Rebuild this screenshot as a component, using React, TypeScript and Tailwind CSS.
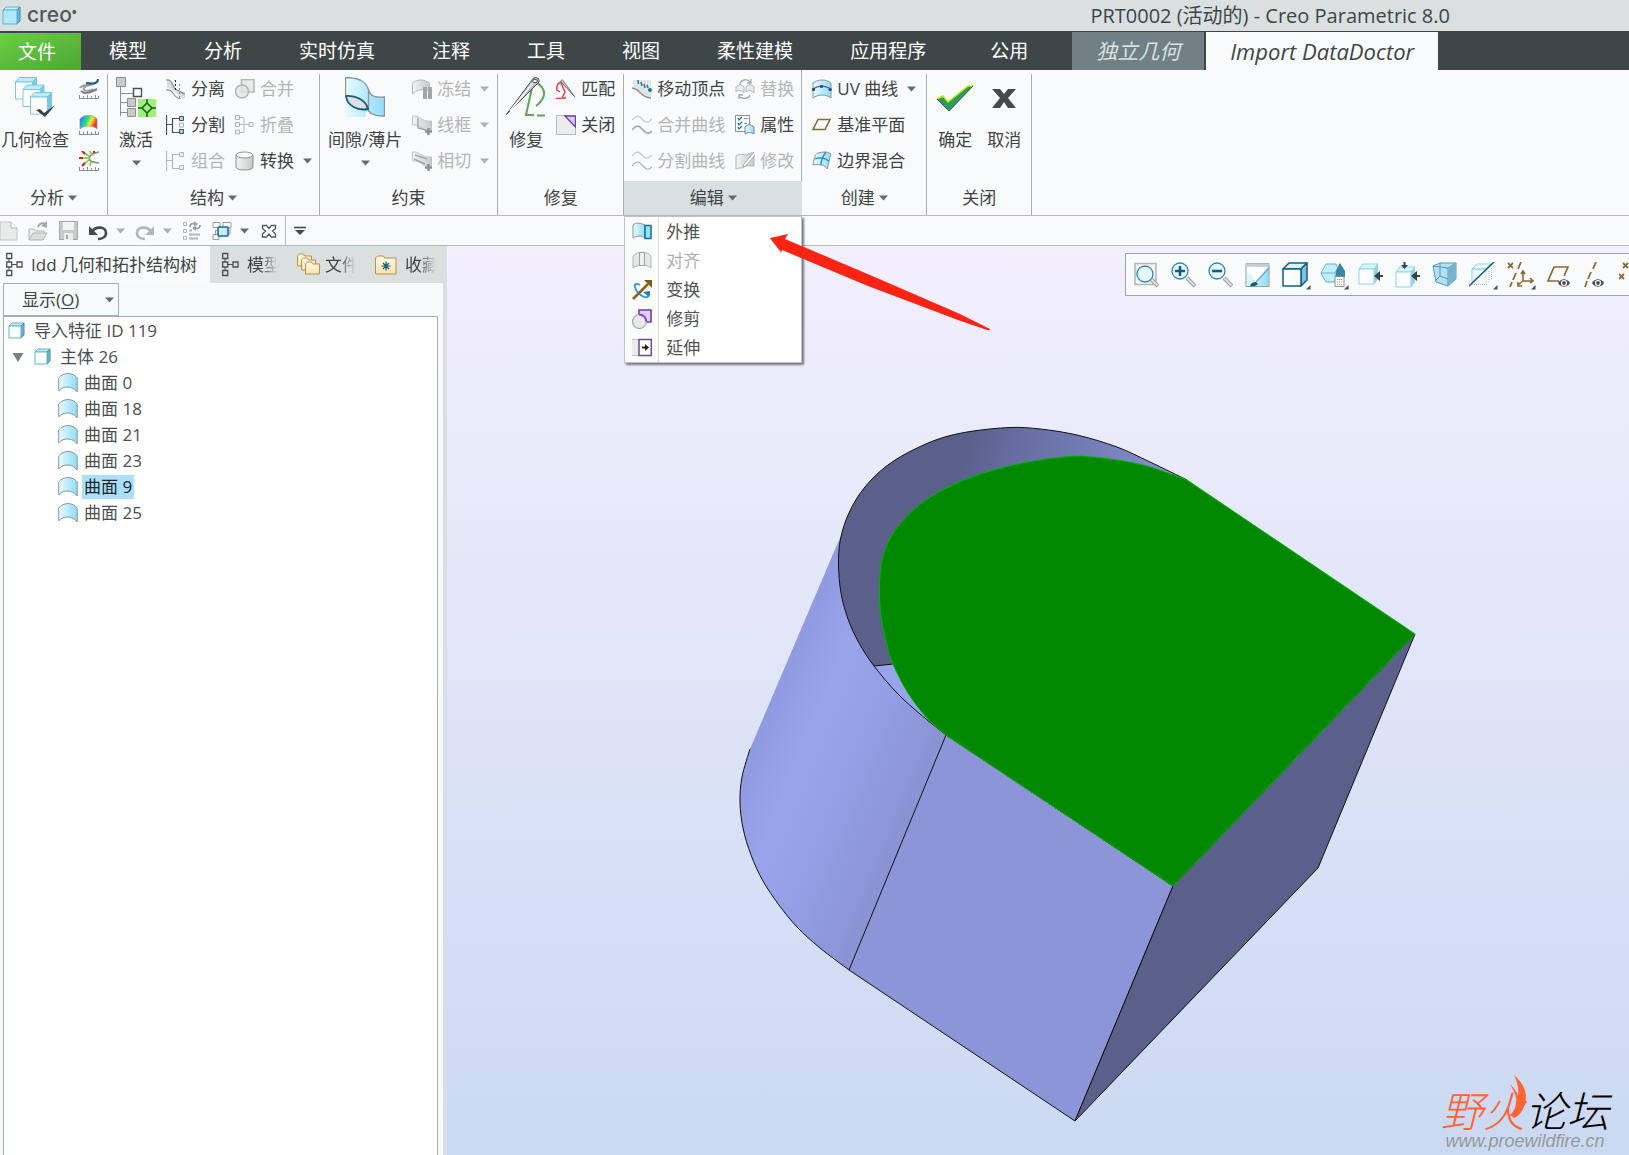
import type { ReactNode } from "react";

/* ---------- small shapes shared by the icons ---------- */

function Icon({ w = 20, h = 20, children }: { w?: number; h?: number; children: ReactNode }) {
  return (
    <svg width={w} height={h} viewBox={`0 0 ${w} ${h}`} fill="none" className="shrink-0" aria-hidden="true">
      {children}
    </svg>
  );
}

function Caret({ muted = false }: { muted?: boolean }) {
  return (
    <svg width="9" height="6" viewBox="0 0 9 6" className="shrink-0" aria-hidden="true">
      <path d="M0 0.5h9L4.5 5.5z" fill={muted ? "#aeb1b1" : "#666a6b"} />
    </svg>
  );
}

function Box({ x, y, s, d = 4, face = "#ffffff" }: { x: number; y: number; s: number; d?: number; face?: string }) {
  return (
    <g strokeLinejoin="round">
      <path d={`M${x} ${y + d}l${d} ${-d}h${s}l${-d} ${d}z`} fill="#c4effc" stroke="#5fb3d2" />
      <path d={`M${x + s} ${y + d}l${d} ${-d}v${s}l${-d} ${d}z`} fill="#6cb8d4" stroke="#3d8fb0" />
      <path d={`M${x} ${y + d}h${s}v${s}h${-s}z`} fill={face} stroke="#5fb3d2" />
    </g>
  );
}

function Gradients() {
  return (
    <svg width="0" height="0" className="absolute" aria-hidden="true">
      <defs>
        <linearGradient id="sky" x1="0" x2="1">
          <stop offset="0" stopColor="#e8fbff" />
          <stop offset="1" stopColor="#8fdcfa" />
        </linearGradient>
        <linearGradient id="ash" x1="0" x2="1">
          <stop offset="0" stopColor="#f3f3f3" />
          <stop offset="1" stopColor="#c8caca" />
        </linearGradient>
        <linearGradient id="rainbow" x1="0" x2="1" y1="0" y2="0.4">
          <stop offset="0" stopColor="#7d2be8" />
          <stop offset="0.25" stopColor="#18a8f0" />
          <stop offset="0.5" stopColor="#38e070" />
          <stop offset="0.7" stopColor="#f7ee20" />
          <stop offset="1" stopColor="#f03030" />
        </linearGradient>
        <linearGradient id="folder" x1="0" x2="0" y1="0" y2="1">
          <stop offset="0" stopColor="#fff9e6" />
          <stop offset="1" stopColor="#fbe3ad" />
        </linearGradient>
      </defs>
    </svg>
  );
}

const Ruler = () => <path d="M0 19.5h20M0.5 19v-3M4.5 19v-2M8.5 19v-3M12.5 19v-2M16.5 19v-3M19.5 19v-2" stroke="#8b8e8e" />;

/* ---------- ribbon icons ---------- */

const GeometryCheck = () => (
  <Icon w={40} h={40}>
    <g strokeLinejoin="round" stroke="#7cc6e2">
      {[0, 7.5, 15].map((n) => (
        <g key={n}>
          <path d={`M${n + 0.5} ${n + 5}l4-4.500h17l-4 4.500z`} fill="#bdecfb" />
          <path d={`M${n + 17.5} ${n + 5}l4-4.500v17l-4 4.500z`} fill="#7cc6e2" />
          <path d={`M${n + 0.5} ${n + 5}h17v17h-17z`} fill="#fff" />
        </g>
      ))}
    </g>
    <path d="M21 33l4-1 4 4 11-8-10 12z" fill="#3b4042" />
  </Icon>
);

const CurveAnalysis = () => (
  <Icon>
    <Ruler />
    <path d="M1 9c3-4 7-3 11-3M16 4c-6 3-9 2-11 5s5 4 9 1" stroke="#9a9d9f" strokeWidth="2" />
    <path d="M2 12c4 4 10 1 16-2" stroke="#7d8183" strokeWidth="2" />
    <path d="M7 4c7 1 12 1 12-4" stroke="#1f5f7c" strokeWidth="2" />
  </Icon>
);

const ColorAnalysis = () => (
  <Icon>
    <Ruler />
    <path d="M1 14V4c4-5 13-5 17 0v10c-4-4-13-4-17 0z" fill="url(#rainbow)" stroke="#8b8e8e" strokeWidth="0.6" />
  </Icon>
);

const NormalAnalysis = () => (
  <Icon>
    <Ruler />
    <path d="M20 1c-5 1-9 3-10 6 1 4 4 4 10 5" stroke="#8a8d8f" strokeWidth="1.6" />
    <path d="M9 7H3M10 5L5 2M10 9l-5 4M13 4l-2-4M12 10l-1 5" stroke="#7ec23f" strokeWidth="1.6" />
    <path d="M0 7h4M3 0l3 3M3 15l3-3M15 0v2" stroke="#c02a2a" strokeWidth="2.2" />
  </Icon>
);

const Activate = () => (
  <Icon w={40} h={40}>
    <path d="M4.500 10v29M4.500 16.500h14M4.500 25.500h8M4.500 35.500h8" stroke="#8b8e8e" />
    <path d="M0.500 0.500h9v9h-9zM11.500 21.500h8v8h-8zM11.500 31.500h8v8h-8z" fill="#c9cbcb" stroke="#8b8e8e" />
    <path d="M17.500 11.500h8v8h-8z" fill="#fff" stroke="#4b4f50" strokeWidth="1.4" />
    <path d="M22 22h18v18H22z" fill="#9cf07c" />
    <path d="M31 22v4l-5 5h-4m4 0l5 5v4m0-4l5-5h4m-4 0l-5-5" stroke="#1f5a17" strokeWidth="1.6" />
  </Icon>
);

const Detach = () => (
  <Icon>
    <path d="M1 1c7 0 6 8 10 10l8 2v6c-9 1-6-9-18-10z" fill="#dcdede" />
    <path d="M0 1c8-1 5 8 11 10s4 4 8 4M0 11c9-1 6 8 15 9" stroke="#8b8e8e" strokeWidth="1.2" />
    <path d="M9.500 1v10" stroke="#222" strokeDasharray="2 2" />
    <path d="M13.500 5v15" stroke="#8b8e8e" strokeDasharray="2 2" />
  </Icon>
);

function TreeSplit({ muted = false }: { muted?: boolean }) {
  const c = muted ? "#b3b6b6" : "#4b4f50";
  return (
    <Icon>
      <path d="M0.500 0v20M0 9.500h6M6.500 3v15M6 3.500h7M6 17.500h7" stroke={c} strokeWidth="1.2" />
      <path d="M13.500 1.500h4v4h-4zM13.500 14.500h4v4h-4z" fill={muted ? "#eee" : "#8fdcfa"} stroke={c} />
      {!muted && <path d="M13.500 8h4v4h-4z" fill="#eee" stroke="#b3b6b6" />}
    </Icon>
  );
}

const Merge = () => (
  <Icon>
    <path d="M6.500 0.500h12.500v12.500H6.500z" fill="#e9eaea" stroke="#b3b6b6" strokeWidth="1.5" />
    <circle cx="7" cy="12.500" r="6.500" fill="#e4e5e5" fillOpacity="0.8" stroke="#b3b6b6" strokeWidth="1.5" />
  </Icon>
);

const Fold = () => (
  <Icon>
    <path d="M5 2.500h4v15H5M5 9.500h9" stroke="#b9bbbb" />
    <path d="M0.500 0.500h4v4h-4zM0.500 7.500h4v4h-4zM0.500 15h4v4h-4zM14 7.500h4v4h-4z" fill="#efefef" stroke="#b3b6b6" />
  </Icon>
);

const Convert = () => (
  <Icon>
    <path d="M1 4v12c0 4 17 4 17 0V4" fill="url(#ash)" stroke="#8b8e8e" />
    <ellipse cx="9.500" cy="4" rx="8.500" ry="3" fill="#fff" stroke="#8b8e8e" />
  </Icon>
);

const Gap = () => (
  <Icon w={40} h={40}>
    <path d="M0.500 0.500c14 0 20 4 23 12 2 7 6 8 16 7.500v19c-6 0-12 0-16-5-4 1-3 6-3 6h-20z" fill="url(#sky)" />
    <path d="M0.500 18V0.500c14 0 20 4 23 12 2 7 6 8 16 7.500v19c-6 0-12 0-16-5V12" stroke="#8b9498" strokeWidth="1.300" />
    <path d="M1 19c9-1 20 4 22 13-10 2-21-3-22-13z" fill="#dfe1e1" stroke="#155d80" strokeWidth="1.800" />
  </Icon>
);

function GraySurface({ kind }: { kind: "pause" | "frame" | "tangent" }) {
  return (
    <Icon>
      {kind === "pause" ? (
        <path d="M0.500 15V4c5-4 12-4 17 0v8c-5-2-12-2-17 3z" fill="url(#ash)" stroke="#b9bbbb" />
      ) : (
        <path d="M0.500 10V1c9-1 7 6 19 5v9c-10 2-9-6-19-5z" fill="url(#ash)" stroke="#c2c4c4" />
      )}
      {kind === "pause" && <path d="M11 8h4v12h-4zM16 8h4v12h-4z" fill="#a4a7a7" />}
      {kind === "frame" && <path d="M6 3v10l8 2" stroke="#a4a7a7" strokeWidth="1.400" />}
      {kind === "tangent" && <path d="M3 4l12 4M2 8l11 5" stroke="#a4a7a7" strokeWidth="1.400" />}
      {kind !== "pause" && <path d="M16.500 13v7M13 16.500h7" stroke="#8f9292" strokeWidth="2.500" />}
    </Icon>
  );
}

const Repair = () => (
  <Icon w={40} h={40}>
    <path d="M28 5c7 2 11 8 10 13-1 5-4 8-8 11M27 6l-7 32h8M31 38.500h8" stroke="#63a55a" strokeWidth="2" />
    <path d="M0 38L26 3c2-4 8-3 7 2z" fill="#b9bcbc" stroke="#4d5152" />
    <path d="M4 34L27 6" stroke="#fff" strokeWidth="1.500" />
    <ellipse cx="29" cy="4" rx="2.500" ry="1.500" fill="#fff" stroke="#4d5152" />
  </Icon>
);

const Match = () => (
  <Icon>
    <path d="M6 3C2 3 0 8 1 11l3 2m1-9l4 9-3 6h4M5 19.500H0" stroke="#ea3d3d" strokeWidth="1.500" />
    <path d="M19 18L8 3C7 0 4 1 5 3z" fill="#c4c6c6" stroke="#707475" />
  </Icon>
);

const CloseSurface = () => (
  <Icon>
    <path d="M0.500 0.500h19v19h-19z" fill="#ececec" stroke="#b9bbbb" />
    <path d="M9 1h10.500v11z" fill="#d6ccf5" stroke="#6d4aa0" strokeWidth="1.500" />
  </Icon>
);

const MoveVertex = () => (
  <Icon>
    <path d="M1 1h18v18C8 17 10 12 1 9z" fill="#e3e5e5" />
    <path d="M0 9c9 1 7 9 19 10" stroke="#8b8e8e" strokeWidth="1.300" />
    <path d="M6 1l0.500 4M9 3l1 4M12 5l1 4M15 6l1 3" stroke="#1b77a8" strokeWidth="1.500" />
    <circle cx="18" cy="11" r="2" fill="#1b77a8" />
  </Icon>
);

function Waves({ even = false }: { even?: boolean }) {
  return (
    <Icon>
      <path d="M0 5c6-7 8-3 11 0s5 3 9-1" stroke="#c6c8c8" strokeWidth="1.200" />
      <path d="M0 15c6-7 8-3 11 0s5 5 9 1" stroke="#aeb1b1" strokeWidth={even ? 1.2 : 1.8} />
    </Icon>
  );
}

const Replace = () => (
  <Icon>
    <path d="M5 5c1-5 8-5 10-2m1-3v4h-4M15 16c-1 4-8 4-10 2m-1 2v-4h4" stroke="#a4a7a7" strokeWidth="1.300" />
    <path d="M1 13V8c2-3 6-3 8 0v6c-2-3-6-3-8-1zM11 13V8c2-3 6-3 8 0v6c-2-3-6-3-8-1z" fill="#e9eaea" stroke="#b3b6b6" />
  </Icon>
);

const Properties = () => (
  <Icon>
    <path d="M0.500 0.500h14v16h-14z" fill="#fff" stroke="#8b8e8e" />
    <path d="M3 3l1 2 3-3M3 8l1 2 3-3M3 12l1 2 3-3" stroke="#1b77a8" strokeWidth="1.300" />
    <path d="M9 3.500h4M9 8.500h3" stroke="#8b8e8e" />
    <path d="M10 19v-7c3-3 6-3 9 0v7c-3-2-6-2-9 0z" fill="url(#sky)" stroke="#7b8284" />
  </Icon>
);

const Modify = () => (
  <Icon>
    <path d="M1 17V5c4-3 8-1 10-1s4-3 8-2v13c-5 0-8-1-10 1s-4 0-8 2z" fill="url(#ash)" stroke="#b3b6b6" />
    <path d="M19 1L9 13l-1 3 3-1L20 4" fill="#fff" stroke="#a4a7a7" />
  </Icon>
);

const UvCurve = () => (
  <Icon>
    <path d="M1 19V4c5-4 13-4 18 0v15c-5-4-13-4-18 0z" fill="url(#sky)" stroke="#8b9498" />
    <path d="M0 11c6-5 13-5 20 0" stroke="#7746b4" strokeWidth="1.300" />
    <path d="M0.500 9.500h2v2h-2zM8.500 6.500h2v2h-2zM17 9.500h2v2h-2z" fill="#1b5a8c" stroke="#1b5a8c" />
  </Icon>
);

const Plane = () => (
  <Icon>
    <path d="M6 4.500h12l-5 10H1z" stroke="#8a6a34" strokeWidth="1.600" />
  </Icon>
);

const Blend = () => (
  <Icon>
    <path d="M1 14C2 8 3 3 6 2c5-1 9-2 13 1-2 5-2 9-4 15-2-3-3-4-5-4s-5-1-9 0z" fill="url(#sky)" stroke="#8b9498" />
    <path d="M14 1c-3 4-5 8-5 13M3 8c5-2 10-1 14 2" stroke="#2b89b4" strokeWidth="1.300" />
  </Icon>
);

const Ok = () => (
  <Icon w={40} h={40}>
    <path d="M2 22l6-3 5 6L33 9h5L14 34z" fill="#2f9a5b" />
    <path d="M2 22l6-3 5 6L33 9h5" stroke="#c5e81c" strokeWidth="1.600" />
    <path d="M2 22l12 12L38 9" stroke="#1d6b3c" />
  </Icon>
);

const Cancel = () => (
  <Icon w={34} h={40}>
    <path d="M5 12h8l4 5 4-5h8l-8 9 8 10h-8l-4-6-4 6H5l8-10z" fill="#46494a" />
  </Icon>
);

/* ---------- drop-down icons ---------- */

const Extrapolate = () => (
  <Icon>
    <path d="M1 16V3c3-3 7-2 12 0v13c-5-3-8-2-12 0z" fill="url(#sky)" stroke="#8b9498" />
    <path d="M13 3.500h6v13h-6z" fill="#8fe3fb" stroke="#1b6b8c" strokeWidth="1.500" />
  </Icon>
);

const Align = () => (
  <Icon>
    <path d="M1 17V5c4-5 14-5 18 0v12c-4-4-14-4-18 0z" fill="#e5e7e7" stroke="#b3b6b6" />
    <path d="M7.500 1.500h5v13h-5z" fill="#efefef" stroke="#9fa2a2" />
  </Icon>
);

const Transform = () => (
  <Icon>
    <path d="M8 5C4 3 2 4 3 7c1 4 5 8 9 10 4 1 6-1 5-5" stroke="#2b9bcc" strokeWidth="1.800" />
    <path d="M11 12l7-1-1 6z" fill="#2b7ba4" />
    <path d="M1 19L16 4" stroke="#8a6420" strokeWidth="2.600" />
    <path d="M12 0h8v8z" fill="#7a5a20" />
  </Icon>
);

const Trim = () => (
  <Icon>
    <path d="M7 1h12v12H7z" fill="#dcd2fa" stroke="#6d3fa8" strokeWidth="1.600" />
    <circle cx="7.500" cy="12.500" r="7" fill="#e8e9e9" stroke="#a4a7a7" strokeWidth="1.200" />
    <path d="M7 5.500c4 0 7 3 7.500 7.500" stroke="#8c3fe0" strokeWidth="2" />
  </Icon>
);

const Extend = () => (
  <Icon>
    <path d="M0 1.500h7v16H0" fill="#ececec" stroke="#c2c4c4" />
    <path d="M7 1.500h12.300v16H7z" fill="#fff" stroke="#6d4aa0" strokeWidth="1.500" />
    <path d="M10 9.500h4" stroke="#222" strokeWidth="2" />
    <path d="M13 6l4 3.500-4 3.500z" fill="#222" />
  </Icon>
);

/* ---------- quick access icons ---------- */

const NewDoc = () => (
  <Icon w={18}>
    <path d="M0 1h11l6 6v12H0z" fill="#e9eaea" stroke="#c2c4c4" />
    <path d="M11 1v6h6" fill="#fff" stroke="#b3b6b6" />
  </Icon>
);

const OpenDoc = () => (
  <Icon w={21}>
    <path d="M1 19V8h5l2 2h8v3" fill="#ececec" stroke="#b3b6b6" />
    <path d="M1 19l4-7h14l-4 7z" fill="#dcdede" stroke="#b3b6b6" />
    <path d="M10 6c1-3 4-5 7-3" stroke="#a4a7a7" strokeWidth="2" />
    <path d="M19 0v7l-6-2z" fill="#a4a7a7" />
  </Icon>
);

const SaveDoc = () => (
  <Icon w={19}>
    <path d="M0.500 0.500h18v18h-18z" fill="#c9cbcb" stroke="#a4a7a7" />
    <path d="M4 1h11v8H4z" fill="#f2f3f3" />
    <path d="M5 12h9v7H5z" fill="#eceded" />
    <path d="M7 14h2v4H7z" fill="#a4a7a7" />
  </Icon>
);

function UndoArrow({ redo = false }: { redo?: boolean }) {
  return (
    <Icon>
      <g transform={redo ? "translate(20 0) scale(-1 1)" : undefined}>
        <path d="M4 11c3-6 14-6 14 1 0 4-4 6-8 6" stroke={redo ? "#b3b6b6" : "#46494a"} strokeWidth="2.600" />
        <path d="M1 5l0 9h9z" fill={redo ? "#b3b6b6" : "#46494a"} />
      </g>
    </Icon>
  );
}

const Regenerate = () => (
  <Icon>
    <path d="M1.500 1.500h3v3h-3zM1.500 8.500h3v3h-3zM1.500 15.500h3v3h-3z" stroke="#b3b6b6" />
    <path d="M7 9.500h3M7 13.500h11M7 17.500h9" stroke="#b3b6b6" strokeWidth="2" />
    <path d="M8 6c0-3 2-4 5-3m5 1c0 3-2 4-5 3" stroke="#9a9d9d" strokeWidth="1.800" />
    <path d="M12 0l4 3-4 3zM14 4l-4 3 4 3z" fill="#9a9d9d" />
  </Icon>
);

const Windows = () => (
  <Icon>
    <path d="M1 1.500h7v5H1zM11 1.500h8v5h-8zM1 13.500h6v5H1zM7 7v8" stroke="#9a9d9d" />
    <path d="M3 9.500h3M3.500 9v4M17 13h1V7" stroke="#9a9d9d" />
    <rect x="6" y="6" width="10" height="9" rx="1" fill="#c4effc" stroke="#1b6b8c" strokeWidth="1.600" />
  </Icon>
);

const CloseWindow = () => (
  <Icon w={16}>
    <path d="M1.500 4.500h4l2.500 3 2.500-3h4v3l-3 2.500 3 3v3h-4l-2.500-3-2.500 3h-4v-3l3-3-3-2.500z" fill="#fff" stroke="#55595a" strokeWidth="1.400" />
  </Icon>
);

const Customize = () => (
  <Icon w={12}>
    <path d="M0 6.500h12" stroke="#46494a" strokeWidth="1.600" />
    <path d="M1 9h10l-5 5z" fill="#46494a" />
  </Icon>
);

/* ---------- side panel icons ---------- */

const TreeIcon = () => (
  <Icon w={17} h={25}>
    <path d="M3 7v3M3 15v3M6 12.500h5" stroke="#4b4f50" />
    <path d="M0.700 1.500h5v5h-5zM0.700 10h5v5h-5zM0.700 18.500h5v5h-5zM11 10h5v5h-5z" stroke="#4b4f50" strokeWidth="1.300" />
  </Icon>
);

const FoldersIcon = () => (
  <Icon w={24} h={24}>
    {[0, 4, 8].map((n) => (
      <path key={n} d={`M${n + 0.5} ${n + 13}V${n + 3}l2-2h4l1 2h7v10z`} fill="url(#folder)" stroke="#b98f4a" />
    ))}
  </Icon>
);

const FavoriteIcon = () => (
  <Icon w={22} h={20}>
    <path d="M0.500 19V3l2-2h6l1 2h11.500v16z" fill="url(#folder)" stroke="#b98f4a" />
    <path d="M6.500 11h9M11 6.500v9M8 8l6 6M14 8l-6 6" stroke="#1b5a7c" strokeWidth="1.200" />
  </Icon>
);

const PartIcon = () => (
  <Icon w={18} h={18}>
    <Box x={1} y={1} s={12} d={3} />
  </Icon>
);

const SurfaceIcon = () => (
  <Icon>
    <path d="M0.700 18V5c5-6 14-6 18.500 0v14c-4-6-14-7-18.500-1z" fill="url(#sky)" stroke="#8b9498" />
  </Icon>
);

/* ---------- viewport toolbar icons ---------- */

function ViewIcon({ w = 25, more = false, children }: { w?: number; more?: boolean; children: ReactNode }) {
  return (
    <svg width={more ? 29 : w} height="28" viewBox={`0 0 ${more ? 29 : w} 28`} fill="none" aria-hidden="true">
      {children}
      {more && <path d="M28.500 23v4.500H24z" fill="#4b4f50" />}
    </svg>
  );
}

function Lens({ sign }: { sign?: string }) {
  return (
    <>
      <path d="M16 16l8 8" stroke="#9da0a0" strokeWidth="4" />
      <path d="M16 16l7.500 7.500" stroke="#dcdede" strokeWidth="2" />
      <circle cx={sign ? 9 : 11} cy={sign ? 9 : 12} r="8" fill="#e4f8ff" stroke="#3187ad" strokeWidth="1.300" />
      {sign && <path d={sign} stroke="#155d80" strokeWidth="2.600" />}
    </>
  );
}

const viewTools: { label: string; more?: boolean; icon: ReactNode }[] = [
  {
    label: "重新调整",
    icon: (
      <ViewIcon>
        <path d="M1 1.500h21v21H1z" fill="#f3f4f4" stroke="#b3b6b6" strokeWidth="1.500" />
        <Lens />
      </ViewIcon>
    ),
  },
  { label: "放大", icon: <ViewIcon><Lens sign="M4 9h10M9 4v10" /></ViewIcon> },
  { label: "缩小", icon: <ViewIcon><Lens sign="M4 9h10" /></ViewIcon> },
  {
    label: "重画",
    icon: (
      <ViewIcon>
        <path d="M1 1.500h23v23H1z" fill="url(#sky)" stroke="#9da0a0" />
        <path d="M1 1.500h23v3H1z" fill="#c9cbcb" />
        <path d="M2 5h20v1L10 21C8 14 5 11 2 11z" fill="#fff" />
        <path d="M24 6L11 20" stroke="#7ba9bd" strokeWidth="1.500" />
        <path d="M5 24c1-3 3-4 6-4l2 2c-2 2-5 3-8 2z" fill="#155d80" />
      </ViewIcon>
    ),
  },
  {
    label: "显示样式",
    more: true,
    icon: (
      <ViewIcon more>
        <g stroke="#155d80" strokeWidth="1.500" strokeLinejoin="round">
          <path d="M1 7l6-6h18l-6 6z" fill="#d8f5ff" />
          <path d="M19 7l6-6v17l-6 6z" fill="#7cc3df" />
          <path d="M1 7h18v17H1z" fill="#fff" />
        </g>
      </ViewIcon>
    ),
  },
  {
    label: "已保存方向",
    more: true,
    icon: (
      <ViewIcon more>
        <path d="M1 11l5-9h10l4 9-4 9H6z" fill="#c4effc" stroke="#5fb3d2" />
        <path d="M1 11h14l5-9M15 11l1 9" stroke="#5fb3d2" />
        <path d="M20 1l5 8v6h-9V9z" fill="#3a84a6" />
        <path d="M15 14.500h9v10h-9z" fill="#fff" stroke="#8b8e8e" />
        <path d="M17 17.500h6M17 20h6M17 22.500h6" stroke="#8b8e8e" strokeDasharray="1 1" />
      </ViewIcon>
    ),
  },
  {
    label: "视图法向",
    icon: (
      <ViewIcon>
        <path d="M1 7l4-5h15l-4 5z" fill="#d8f5ff" stroke="#8fd3ec" />
        <path d="M16 7l4-5v15l-4 5z" fill="#8fd3ec" />
        <path d="M1 7h15v15H1z" fill="#fff" stroke="#8fd3ec" />
        <path d="M25 14h-6" stroke="#3b4042" strokeWidth="2" />
        <path d="M22 9v10l-6-5z" fill="#3b4042" />
      </ViewIcon>
    ),
  },
  {
    label: "标准方向",
    icon: (
      <ViewIcon>
        <path d="M1 10l4-5h15l-4 5z" fill="#d8f5ff" stroke="#8fd3ec" />
        <path d="M16 10l4-5v15l-4 5z" fill="#8fd3ec" />
        <path d="M1 10h15v15H1z" fill="#fff" stroke="#8fd3ec" />
        <path d="M25 14h-6M9.500 0v4" stroke="#3b4042" strokeWidth="2" />
        <path d="M22 9v10l-6-5zM6 3h7l-3.500 4z" fill="#3b4042" />
      </ViewIcon>
    ),
  },
  {
    label: "透视图",
    icon: (
      <ViewIcon>
        <path d="M1 4l7-3h16v16l-8 7-12-4z" fill="#b6dff0" stroke="#4f9dbd" />
        <path d="M1 4l15 2 8-5M16 6v18M8 1v13l8 3M8 14l-5 5" stroke="#4f9dbd" />
        <path d="M16 6l8-5v16l-8 7z" fill="#76b4cf" />
      </ViewIcon>
    ),
  },
  {
    label: "截面",
    more: true,
    icon: (
      <ViewIcon more>
        <path d="M3 7l5-5h14L5 20H3z" fill="#f3fcff" stroke="#8fd3ec" />
        <path d="M3 7h14l5-5" stroke="#8fd3ec" strokeWidth="1.500" />
        <path d="M3 22.500h14V8M20 20V8M22.500 17V5" stroke="#b3b6b6" strokeDasharray="1 1" />
        <path d="M0 24L25 0" stroke="#155d80" strokeWidth="1.500" />
      </ViewIcon>
    ),
  },
  {
    label: "基准显示过滤器",
    more: true,
    icon: (
      <ViewIcon more>
        <path d="M1 1l5 5M6 1L1 6M14 0l-3 7M9 11l-3 7M5 20l-2 5" stroke="#8a6a34" strokeWidth="1.800" />
        <path d="M16 10v9h9M16 19l-5 4M14 12l2-3 2 3M23 16l3 3-3 2M11 20v4h4" stroke="#8a6a34" strokeWidth="1.600" />
      </ViewIcon>
    ),
  },
  {
    label: "平面显示",
    icon: (
      <ViewIcon w={27}>
        <path d="M14 19H3L9 5h14l-4 9" stroke="#8a6a34" strokeWidth="1.700" />
        <path d="M13 21c3-5 9-5 12 0-3 5-9 5-12 0z" fill="#4b4f50" />
        <circle cx="19" cy="21" r="2.500" fill="#4b4f50" stroke="#fff" strokeWidth="1.200" />
      </ViewIcon>
    ),
  },
  {
    label: "轴显示",
    icon: (
      <ViewIcon w={27}>
        <path d="M14 0l-3 7M9 10l-3 7M5 19l-2 6" stroke="#8a6a34" strokeWidth="1.800" />
        <path d="M10 21c3-5 9-5 12 0-3 5-9 5-12 0z" fill="#4b4f50" />
        <circle cx="16" cy="21" r="2.500" fill="#4b4f50" stroke="#fff" strokeWidth="1.200" />
      </ViewIcon>
    ),
  },
];

/* ---------- ribbon parts ---------- */

function Group({ label, caret, children, pad }: { label: string; caret?: boolean; children: ReactNode; pad: string }) {
  return (
    <section className="flex shrink-0 flex-col">
      <div className="mt-1 flex grow flex-col border-r border-[#a9adae]">
        <div className={`-mt-[3px] flex h-[109px] ${pad}`}>{children}</div>
        <div className="flex grow items-center justify-center">
          <button className="flex items-center gap-1">
            {label}
            {caret && <Caret />}
          </button>
        </div>
      </div>
    </section>
  );
}

function Big({ icon, label, caret }: { icon: ReactNode; label: string; caret?: boolean }) {
  return (
    <button className="flex flex-col items-center pt-[6px]">
      {icon}
      <span className="mt-[11px] leading-6">{label}</span>
      {caret && <span className="mt-2"><Caret /></span>}
    </button>
  );
}

function Cmd({ icon, label, caret, off }: { icon: ReactNode; label: string; caret?: boolean; off?: boolean }) {
  return (
    <button disabled={off} className="flex h-9 items-center gap-[5px] disabled:text-[#b3b5b5]">
      {icon}
      <span>{label}</span>
      {caret && <span className="ml-1"><Caret muted={off} /></span>}
    </button>
  );
}

const Column = ({ children }: { children: ReactNode }) => <div className="flex flex-col items-start">{children}</div>;

const menuItems = [
  { label: "外推", icon: <Extrapolate /> },
  { label: "对齐", icon: <Align />, off: true },
  { label: "变换", icon: <Transform /> },
  { label: "修剪", icon: <Trim /> },
  { label: "延伸", icon: <Extend /> },
];

function EditMenu() {
  return (
    <div className="absolute left-0 top-full z-10 mt-px w-full border border-[#bfc3c5] bg-white shadow-[2px_2px_2px_#77777a]">
      {menuItems.map((item) => (
        <button key={item.label} disabled={item.off} className="flex h-[29px] w-full items-center text-[#4f5152] disabled:text-[#adafaf]">
          <span className="flex h-full w-[34px] items-center border-r border-[#d9dcdd] bg-[#fafbfb] pl-[7px]">{item.icon}</span>
          <span className="pl-[7px]">{item.label}</span>
        </button>
      ))}
      <svg width="224" height="98" viewBox="768 232 224 98" className="absolute left-[143px] top-[15px] max-w-none" aria-hidden="true">
        <path d="M770 238l18-4-3 5 85 36 90 39 30 15v2l-32-11-90-34-86-36-1 2z" fill="#ff2314" />
        <path d="M770 238l11 14 2-6z" fill="#ff2314" />
      </svg>
    </div>
  );
}

function Ribbon() {
  return (
    <div className="flex h-[146px] border-b border-[#b2bbbd] bg-[#f8fafb]">
      <Group label="分析" caret pad="gap-2.5 pl-px pr-2">
        <Big icon={<GeometryCheck />} label="几何检查" />
        <Column>
          <button aria-label="曲线分析" className="flex h-9 items-center"><CurveAnalysis /></button>
          <button aria-label="着色分析" className="flex h-9 items-center"><ColorAnalysis /></button>
          <button aria-label="法向分析" className="flex h-9 items-center"><NormalAnalysis /></button>
        </Column>
      </Group>
      <Group label="结构" caret pad="gap-2.5 pl-2 pr-[7px]">
        <Big icon={<Activate />} label="激活" caret />
        <Column>
          <Cmd icon={<Detach />} label="分离" />
          <Cmd icon={<TreeSplit />} label="分割" />
          <Cmd icon={<TreeSplit muted />} label="组合" off />
        </Column>
        <Column>
          <Cmd icon={<Merge />} label="合并" off />
          <Cmd icon={<Fold />} label="折叠" off />
          <Cmd icon={<Convert />} label="转换" caret />
        </Column>
      </Group>
      <Group label="约束" pad="gap-2.5 px-2">
        <Big icon={<Gap />} label="间隙/薄片" caret />
        <Column>
          <Cmd icon={<GraySurface kind="pause" />} label="冻结" caret off />
          <Cmd icon={<GraySurface kind="frame" />} label="线框" caret off />
          <Cmd icon={<GraySurface kind="tangent" />} label="相切" caret off />
        </Column>
      </Group>
      <Group label="修复" pad="gap-2.5 px-2">
        <Big icon={<Repair />} label="修复" />
        <Column>
          <Cmd icon={<Match />} label="匹配" />
          <Cmd icon={<CloseSurface />} label="关闭" />
        </Column>
      </Group>
      <section className="relative flex shrink-0 flex-col">
        <div className="flex h-[111px] gap-2.5 border-r border-[#a9adae] pt-px pr-[7px] pl-2">
          <Column>
            <Cmd icon={<MoveVertex />} label="移动顶点" />
            <Cmd icon={<Waves />} label="合并曲线" off />
            <Cmd icon={<Waves even />} label="分割曲线" off />
          </Column>
          <Column>
            <Cmd icon={<Replace />} label="替换" off />
            <Cmd icon={<Properties />} label="属性" />
            <Cmd icon={<Modify />} label="修改" off />
          </Column>
        </div>
        <button aria-expanded="true" className="flex grow items-center justify-center gap-1 bg-[#d8e0e3]">
          编辑
          <Caret />
        </button>
        <EditMenu />
      </section>
      <Group label="创建" caret pad="px-2.5">
        <Column>
          <Cmd icon={<UvCurve />} label="UV 曲线" caret />
          <Cmd icon={<Plane />} label="基准平面" />
          <Cmd icon={<Blend />} label="边界混合" />
        </Column>
      </Group>
      <Group label="关闭" pad="gap-3 pl-2 pr-2.5">
        <Big icon={<Ok />} label="确定" />
        <Big icon={<Cancel />} label="取消" />
      </Group>
    </div>
  );
}

const navTabs = ["模型", "分析", "实时仿真", "注释", "工具", "视图", "柔性建模", "应用程序"];

function Header() {
  return (
    <header>
      <div className="flex h-[31px] items-center bg-[#dae0e0]">
        <div className="flex w-24 shrink-0 items-center gap-1.5 pl-[2px]">
          <Icon w={19}>
            <Box x={1} y={1} s={14} d={3} face="#aeeafc" />
          </Icon>
          <span className="flex pb-0.5 text-[21px] leading-6 font-medium text-[#55595a] [font-family:Inter,sans-serif]">
            creo<sup className="text-[5px] leading-6">●</sup>
          </span>
        </div>
        <h1 className="mr-[179px] ml-auto text-[20px] text-[#3e4546]">PRT0002 (活动的) - Creo Parametric 8.0</h1>
      </div>
      <nav className="flex h-[39px] bg-[#3e4648] pt-px text-[19px] text-white">
        <button className="mt-px bg-linear-to-br from-[#68d044] to-[#4fa535] pr-[25px] pl-[18px]">文件</button>
        <div className="flex gap-px">
          {navTabs.map((t) => (
            <button key={t} className="px-7 whitespace-nowrap">{t}</button>
          ))}
        </div>
        <button className="mr-4 ml-2 px-7 whitespace-nowrap">公用</button>
        <button className="mr-0.5 bg-[#708084] px-6 text-[21px] whitespace-nowrap text-[#d5e3e3] italic">独立几何</button>
        <button className="bg-[#f8fafb] px-6 text-[22px] whitespace-nowrap text-[#3e4546] italic">Import DataDoctor</button>
      </nav>
    </header>
  );
}

function QuickAccess() {
  return (
    <div className="flex h-[30px] shrink-0 items-center border-b border-[#b2bbbd] bg-[#f8fafb]">
      <button aria-label="新建"><NewDoc /></button>
      <button aria-label="打开" className="ml-2.5"><OpenDoc /></button>
      <button aria-label="保存" className="ml-2.5"><SaveDoc /></button>
      <button aria-label="撤消" className="ml-2.5 flex items-center gap-2"><UndoArrow /><Caret muted /></button>
      <button aria-label="重做" className="ml-2.5 flex items-center gap-2"><UndoArrow redo /><Caret muted /></button>
      <button aria-label="重新生成" className="ml-2.5"><Regenerate /></button>
      <button aria-label="窗口" className="ml-2.5 flex items-center gap-2"><Windows /><Caret /></button>
      <button aria-label="关闭窗口" className="ml-3"><CloseWindow /></button>
      <button aria-label="自定义" className="ml-2 flex h-full items-center border-l border-[#b2bbbd] pl-2"><Customize /></button>
    </div>
  );
}

const surfaces = [0, 18, 21, 23, 9, 25];

function SidePanel() {
  const fade = "whitespace-nowrap [mask-image:linear-gradient(to_right,black_40%,transparent_90%)]";
  return (
    <aside className="flex w-[447px] shrink-0 flex-col border-r-4 border-[#d9dfe0] bg-[#f7fafa]">
      <div className="flex h-[37px] bg-[#dae0e0]">
        <button className="flex w-[210px] items-center gap-2 bg-[#f8fafb] pl-1.5 whitespace-nowrap">
          <TreeIcon />
          Idd 几何和拓扑结构树
        </button>
        <button className="ml-3 flex items-center gap-2"><TreeIcon /><span className={fade}>模型</span></button>
        <button className="ml-4 flex items-center gap-1"><FoldersIcon /><span className={fade}>文件</span></button>
        <button className="ml-4 flex items-center gap-2"><FavoriteIcon /><span className={fade}>收藏</span></button>
      </div>
      <button className="ml-[3px] flex h-[33px] w-[116px] items-center justify-between border border-[#a9adae] pr-1 pl-[18px]">
        <span>显示(<u className="underline-offset-2">O</u>)</span>
        <Caret />
      </button>
      <ul className="mr-[5px] ml-[3px] grow border border-b-0 border-[#a9adae] bg-white pt-px text-[#4b4e4f]">
        <li className="flex h-[26px] items-center gap-2 pl-1"><PartIcon />导入特征 ID 119</li>
        <li>
          <div className="flex h-[26px] items-center gap-2 pl-2">
            <svg width="12" height="9" viewBox="0 0 12 9" aria-hidden="true"><path d="M0.500 0h11L6 9z" fill="#7d8081" /></svg>
            <span className="ml-0.5"><PartIcon /></span>
            <span>主体 26</span>
          </div>
          <ul>
            {surfaces.map((n) => (
              <li key={n} className="flex h-[26px] items-center gap-1 pl-[54px]">
                <SurfaceIcon />
                <span className={n === 9 ? "bg-[#a9e0fd] px-0.5 text-[#222]" : "px-0.5"}>曲面 {n}</span>
              </li>
            ))}
          </ul>
        </li>
      </ul>
    </aside>
  );
}

/* ---------- solid model ---------- */

type Point = [number, number];

// Catmull-Rom spline through the points, written as cubic segments
function spline(points: Point[]) {
  return points
    .slice(0, -1)
    .map((p, i) => {
      const prev = points[i - 1] ?? p;
      const next = points[i + 1];
      const after = points[i + 2] ?? next;
      const c1 = [p[0] + (next[0] - prev[0]) / 6, p[1] + (next[1] - prev[1]) / 6];
      const c2 = [next[0] - (after[0] - p[0]) / 6, next[1] - (after[1] - p[1]) / 6];
      return `C${c1.join(" ")} ${c2.join(" ")} ${next.join(" ")}`;
    })
    .join("");
}

const rim: Point[] = [
  [1187, 480], [1150, 462], [1117, 447], [1077, 435], [1040, 429], [1010, 427.5], [970, 431.5], [940, 438.5], [912, 450.5],
  [890, 463.5], [872, 479], [857, 498], [846, 520], [840, 542], [838.5, 565], [841, 593], [848, 619], [859, 643], [874, 666],
  [897, 693], [920, 714], [946, 735],
];
const base: Point[] = [
  [750, 749], [742, 777], [740, 802], [743, 828], [751, 855], [763, 881], [779, 905], [797, 927], [820, 948], [849, 970],
];
const cap: Point[] = [
  [1187, 480], [1143, 465], [1093, 457], [1063, 457], [1023, 463], [985, 472.5], [948, 487], [918, 506], [897, 528],
  [885, 550], [880, 575], [880, 607], [885, 637], [893, 664], [908, 693], [927, 718], [946, 735],
];

function Model() {
  return (
    <svg viewBox="447 246 1182 909" className="absolute inset-0 h-full w-full" role="img" aria-label="PRT0002">
      <defs>
        <linearGradient id="outer" gradientUnits="userSpaceOnUse" x1="748" y1="750" x2="905" y2="815">
          <stop offset="0" stopColor="#909ae0" />
          <stop offset="0.300" stopColor="#98a4ec" />
          <stop offset="0.550" stopColor="#95a0e7" />
          <stop offset="1" stopColor="#8a94d5" />
        </linearGradient>
        <linearGradient id="inner" gradientUnits="userSpaceOnUse" x1="970" y1="440" x2="1180" y2="500">
          <stop offset="0" stopColor="#5a608a" />
          <stop offset="0.200" stopColor="#656da0" />
          <stop offset="0.750" stopColor="#7d88c2" />
          <stop offset="1" stopColor="#8a95d5" />
        </linearGradient>
      </defs>
      <path d={`M845 526L750 749${spline(base)}L946 735L880 640Z`} fill="url(#outer)" />
      <path d={`M1187 480${spline(rim)}Z`} fill="url(#inner)" />
      <path d="M874 666C891 690 914 713 946 735L893 664Z" fill="#98a4ec" />
      <g stroke="#111" fill="none">
        <path d={`M1187 480${spline(rim)}`} />
        <path d={`M874 666L893 664M750 749${spline(base)}`} />
        <path d="M946 735L849 970L1075 1121L1173 886Z" fill="#8b95d8" />
        <path d="M1415 634L1318 868L1075 1121L1173 886Z" fill="#5a608a" />
      </g>
      <path d={`M1187 480${spline(cap)}L1173 886L1415 634Z`} fill="#008800" stroke="#00b400" />
    </svg>
  );
}

function Watermark() {
  return (
    <div className="absolute right-5 bottom-1 flex flex-col items-center italic">
      <div className="relative text-[42px] leading-10 font-light whitespace-nowrap text-black">
        <span className="text-[#ff6432]">野火</span>论坛
        <svg width="20" height="44" viewBox="0 0 20 44" className="absolute -top-4 left-[67px]" aria-hidden="true">
          <path d="M6 0c9 8 14 17 11 28-2 8-6 13-11 15l-4-3c5-5 6-9 6-13 1-7-3-12-6-18 4 4 7 8 8 12 1-8-1-15-4-21z" fill="#ff6432" />
        </svg>
      </div>
      <span className="text-[18px] leading-5 text-[#96999c] [font-family:'Liberation_Sans',sans-serif]">www.proewildfire.cn</span>
    </div>
  );
}

function Viewport() {
  return (
    <main className="relative min-w-0 grow overflow-hidden bg-linear-to-b from-[#f3effd] to-[#cad9f2]">
      <Model />
      <div className="absolute top-[7px] right-0 flex h-[43px] items-center border border-r-0 border-[#9fa3a5] bg-[#f8fafb] pt-0.5 pl-2">
        {viewTools.map((tool) => (
          <button key={tool.label} aria-label={tool.label} className={tool.more ? "w-[38px]" : "w-[37px]"}>
            {tool.icon}
          </button>
        ))}
        <button aria-label="点显示">
          <ViewIcon w={10}>
            <path d="M4 1l5 5M9 1L4 6M0 12l5 5M5 12l-5 5" stroke="#8a6a34" strokeWidth="1.800" />
          </ViewIcon>
        </button>
      </div>
      <Watermark />
    </main>
  );
}

export default function App() {
  return (
    <div className="flex min-h-screen flex-col overflow-hidden text-[17px] leading-6 text-[#3e4344] [font-family:'Open_Sans','Noto_Sans_CJK_SC',sans-serif]">
      <Gradients />
      <Header />
      <Ribbon />
      <QuickAccess />
      <div className="flex grow">
        <SidePanel />
        <Viewport />
      </div>
    </div>
  );
}
